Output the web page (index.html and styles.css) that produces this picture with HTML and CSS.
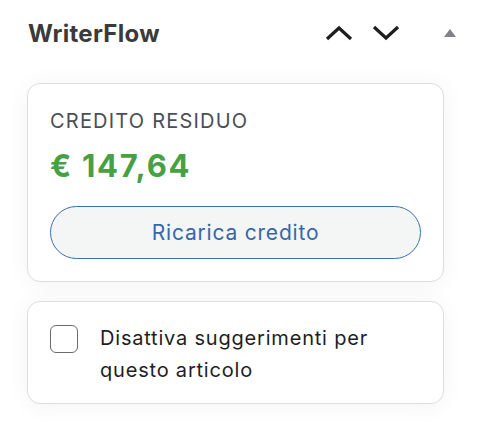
FILE: index.html
```html
<!DOCTYPE html>
<html lang="it">
<head>
<meta charset="utf-8">
<title>WriterFlow</title>
<link rel="stylesheet" href="styles.css">
</head>
<body>
<div class="panel">
  <header class="header">
    <h2 class="title">WriterFlow</h2>
    <div class="controls">
      <button class="icon-btn" aria-label="Sposta su">
        <svg width="28" height="16" viewBox="0 0 28 16"><path d="M2 14 L14 3 L26 14" fill="none" stroke="#1e1e1e" stroke-width="3.2"/></svg>
      </button>
      <button class="icon-btn" aria-label="Sposta giù">
        <svg width="28" height="16" viewBox="0 0 28 16"><path d="M2 2 L14 13 L26 2" fill="none" stroke="#1e1e1e" stroke-width="3.2"/></svg>
      </button>
      <button class="icon-btn toggle" aria-label="Comprimi">
        <svg width="14" height="10" viewBox="0 0 14 10"><path d="M7 1 L13 9 L1 9 Z" fill="#80838a"/></svg>
      </button>
    </div>
  </header>
  <div class="body">
    <section class="card credit">
      <div class="label">CREDITO RESIDUO</div>
      <div class="amount">€ 147,64</div>
      <button class="recharge">Ricarica credito</button>
    </section>
    <section class="card option">
      <label class="check">
        <span class="box"></span>
        <span class="check-text">Disattiva suggerimenti per questo articolo</span>
      </label>
    </section>
  </div>
</div>
</body>
</html>
```
FILE: styles.css
```css
* { box-sizing: border-box; }
html, body { margin: 0; padding: 0; background: #ffffff; }
body { font-family: Inter, "Noto Sans", sans-serif; }
.panel { width: 478px; height: 422px; }
.header {
  height: 66px;
  display: flex;
  align-items: center;
  justify-content: space-between;
  padding: 0 20px 0 28px;
}
.title {
  margin: 0;
  font-size: 24px;
  font-weight: 700;
  color: #3a3a3a;
  letter-spacing: 0.3px;
}
.controls { display: flex; align-items: center; }
.icon-btn {
  border: 0; background: none; padding: 0; margin: 0;
  display: flex; align-items: center; justify-content: center;
}
.icon-btn + .icon-btn { margin-left: 19px; }
.icon-btn.toggle { margin-left: 42px; width: 16px; }
.body {
  padding: 17px 34px 0 27px;
  display: flex;
  flex-direction: column;
  gap: 19px;
}
.card {
  background: #fff;
  border: 1px solid #dedede;
  border-radius: 13px;
  box-shadow: 0 2px 24px rgba(0,0,0,0.05);
  padding: 0 22px;
}
.credit { padding-top: 25px; padding-bottom: 22px; }
.label {
  font-size: 20px;
  line-height: 24px;
  color: #4b4e55;
  letter-spacing: 1.2px;
}
.amount {
  margin-top: 15px;
  font-size: 31px;
  line-height: 36px;
  font-weight: 700;
  color: #46a044;
  letter-spacing: 1.7px;
}
.recharge {
  display: block;
  margin-top: 22px;
  width: 100%;
  height: 53px;
  border: 1px solid #3c6fb0;
  border-radius: 27px;
  background: #f4f6f6;
  color: #3668a9;
  font-family: inherit;
  font-size: 21px;
  letter-spacing: 0.8px;
}
.option { padding-top: 20px; padding-bottom: 17px; }
.check { display: flex; align-items: flex-start; }
.box {
  flex: none;
  width: 28px; height: 28px;
  margin-top: 3px;
  border: 1px solid #6b6b6b;
  border-radius: 6px;
  background: #fff;
}
.check-text {
  margin-left: 22px;
  font-size: 20px;
  line-height: 32px;
  color: #1e1e1e;
  letter-spacing: 0.8px;
  max-width: 310px;
}
```
